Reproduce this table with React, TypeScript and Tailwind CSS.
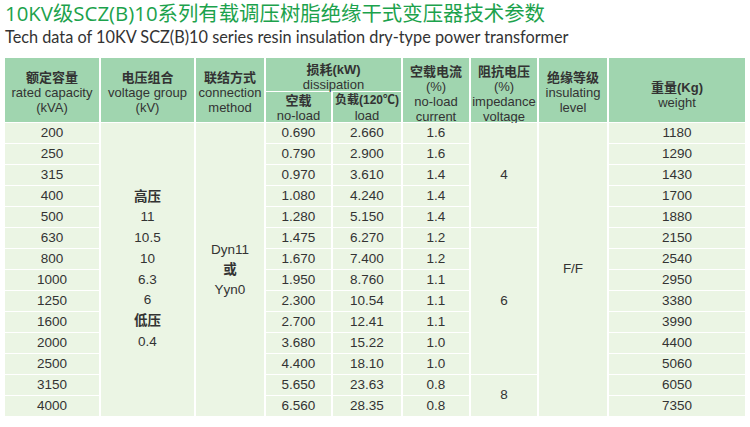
import React from 'react';

const rows: [string, string, string, string, string][] = [
  ['200', '0.690', '2.660', '1.6', '1180'],
  ['250', '0.790', '2.900', '1.6', '1290'],
  ['315', '0.970', '3.610', '1.4', '1430'],
  ['400', '1.080', '4.240', '1.4', '1700'],
  ['500', '1.280', '5.150', '1.4', '1880'],
  ['630', '1.475', '6.270', '1.2', '2150'],
  ['800', '1.670', '7.400', '1.2', '2540'],
  ['1000', '1.950', '8.760', '1.1', '2950'],
  ['1250', '2.300', '10.54', '1.1', '3380'],
  ['1600', '2.700', '12.41', '1.1', '3990'],
  ['2000', '3.680', '15.22', '1.0', '4400'],
  ['2500', '4.400', '18.10', '1.0', '5060'],
  ['3150', '5.650', '23.63', '0.8', '6050'],
  ['4000', '6.560', '28.35', '0.8', '7350'],
];

const head = 'bg-[#a0d5af] flex flex-col items-center justify-center text-center text-[13px] leading-[15px] text-[#333] whitespace-nowrap';
const body = 'bg-[#ebf5e4] flex flex-col items-center justify-center text-center text-[13.5px] text-[#333]';
const cn = 'font-semibold';

export default function App() {
  return (
    <div className="w-[750px] h-[427px] bg-white px-[5px] overflow-hidden">
      <h1 className="font-['Open_Sans','Noto_Sans_CJK_SC',sans-serif] text-[20.4px] leading-[26px] text-[#1ca24c] whitespace-nowrap">
        10KV级SCZ(B)10系列有载调压树脂绝缘干式变压器技术参数
      </h1>
      <p className="font-['Lato','Noto_Sans_CJK_SC',sans-serif] text-[16.3px] leading-[22px] text-[#333] whitespace-nowrap">
        Tech data of 10KV SCZ(B)10 series resin insulation dry-type power transformer
      </p>

      <div className="mt-[10px] grid grid-cols-[94px_93px_68px_65px_68px_66px_66px_68px_136px] grid-rows-[33px_30px_repeat(14,20px)] gap-x-[2px] gap-y-[1px] font-['Liberation_Sans','Noto_Sans_CJK_SC',sans-serif]">
        {/* header */}
        <div className={`${head} col-start-1 row-start-1 row-span-2 pt-[5px]`}>
          <span className={cn}>额定容量</span>
          <span>rated capacity</span>
          <span>(kVA)</span>
        </div>
        <div className={`${head} col-start-2 row-start-1 row-span-2 pt-[5px]`}>
          <span className={cn}>电压组合</span>
          <span>voltage group</span>
          <span>(kV)</span>
        </div>
        <div className={`${head} col-start-3 row-start-1 row-span-2 pt-[5px]`}>
          <span className={cn}>联结方式</span>
          <span>connection</span>
          <span>method</span>
        </div>
        <div className={`${head} col-start-4 col-span-2 row-start-1 pt-[5px]`}>
          <span className={cn}>损耗(kW)</span>
          <span>dissipation</span>
        </div>
        <div className={`${head} col-start-4 row-start-2 pt-[2px]`}>
          <span className={cn}>空载</span>
          <span>no-load</span>
        </div>
        <div className={`${head} col-start-5 row-start-2 pt-[2px]`}>
          <span className={`${cn} text-[12px]`}>负载(120℃)</span>
          <span>load</span>
        </div>
        <div className={`${head} col-start-6 row-start-1 row-span-2 pt-[8px] text-[12px] leading-[13px]`}>
          <span className={cn}>空载电流</span>
          <span>(%)</span>
          <span>no-load</span>
          <span>current</span>
        </div>
        <div className={`${head} col-start-7 row-start-1 row-span-2 pt-[8px] text-[12px] leading-[13px]`}>
          <span className={cn}>阻抗电压</span>
          <span>(%)</span>
          <span>impedance</span>
          <span>voltage</span>
        </div>
        <div className={`${head} col-start-8 row-start-1 row-span-2 pt-[5px]`}>
          <span className={cn}>绝缘等级</span>
          <span>insulating</span>
          <span>level</span>
        </div>
        <div className={`${head} col-start-9 row-start-1 row-span-2 pt-[10px]`}>
          <span className={cn}>重量(Kg)</span>
          <span>weight</span>
        </div>

        {/* merged body cells */}
        <div className={`${body} col-start-2 row-start-3 row-span-14 leading-[20.7px]`}>
          <span className={cn}>高压</span>
          <span>11</span>
          <span>10.5</span>
          <span>10</span>
          <span>6.3</span>
          <span>6</span>
          <span className={cn}>低压</span>
          <span>0.4</span>
        </div>
        <div className={`${body} col-start-3 row-start-3 row-span-14 leading-[20px]`}>
          <span>Dyn11</span>
          <span className={cn}>或</span>
          <span>Yyn0</span>
        </div>
        <div className={`${body} col-start-7 row-start-3 row-span-5`}>4</div>
        <div className={`${body} col-start-7 row-start-8 row-span-7`}>6</div>
        <div className={`${body} col-start-7 row-start-15 row-span-2`}>8</div>
        <div className={`${body} col-start-8 row-start-3 row-span-14`}>F/F</div>

        {/* per-row cells, auto placed */}
        {rows.map((r) => (
          <React.Fragment key={r[0]}>
            <div className={body}>{r[0]}</div>
            <div className={body}>{r[1]}</div>
            <div className={body}>{r[2]}</div>
            <div className={body}>{r[3]}</div>
            <div className={body}>{r[4]}</div>
          </React.Fragment>
        ))}
      </div>
    </div>
  );
}
